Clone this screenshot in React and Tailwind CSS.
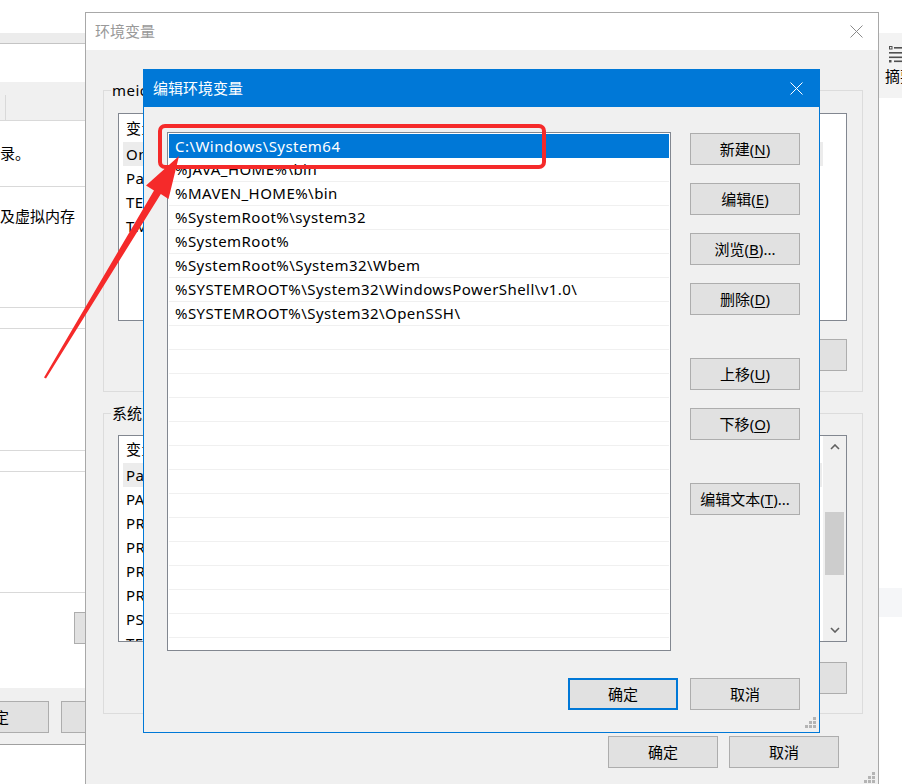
import React from 'react'

// Windows 10 "编辑环境变量" dialog over "环境变量", with a red callout.

const EDIT_ITEMS = [
  'C:\\Windows\\System64',
  '%JAVA_HOME%\\bin',
  '%MAVEN_HOME%\\bin',
  '%SystemRoot%\\system32',
  '%SystemRoot%',
  '%SystemRoot%\\System32\\Wbem',
  '%SYSTEMROOT%\\System32\\WindowsPowerShell\\v1.0\\',
  '%SYSTEMROOT%\\System32\\OpenSSH\\',
]

const USER_VARS = ['OneDrive', 'Path', 'TEMP', 'TMP']
const SYS_VARS = ['Path', 'PATHEXT', 'PROCESSOR_ARCHITECTURE', 'PROCESSOR_IDENTIFIER', 'PROCESSOR_LEVEL', 'PROCESSOR_REVISION', 'PSModulePath', 'TEMP', 'TMP']

function Btn({ label, mn, tail = '', def = false, className = '' }) {
  return (
    <div
      className={
        'flex h-[32px] w-[110px] shrink-0 items-center justify-center bg-[#e1e1e1] text-[15px] leading-none ' +
        (def ? 'border-2 border-[#0078d7] ' : 'border border-[#adadad] ') +
        className
      }
    >
      <span>
        {label}
        {mn && (
          <>
            (<span className="underline underline-offset-2">{mn}</span>){tail}
          </>
        )}
      </span>
    </div>
  )
}

function CloseX({ color }) {
  return (
    <svg width="13" height="13" viewBox="0 0 13 13">
      <path d="M0.5 0.5 L12.5 12.5 M12.5 0.5 L0.5 12.5" stroke={color} strokeWidth="1" fill="none" />
    </svg>
  )
}

function Grip() {
  return (
    <svg width="11" height="11" viewBox="0 0 11 11">
      {[[8, 0], [8, 4], [4, 4], [8, 8], [4, 8], [0, 8]].map(([x, y], i) => (
        <rect key={i} x={x} y={y} width="3" height="3" fill="#b4b4b4" />
      ))}
    </svg>
  )
}

function Chevron({ down }) {
  return (
    <svg width="10" height="6" viewBox="0 0 10 6">
      <path d={down ? 'M1 1 L5 5 L9 1' : 'M1 5 L5 1 L9 5'} stroke="#606060" strokeWidth="1.6" fill="none" />
    </svg>
  )
}

function BackWindow() {
  return (
    <div className="absolute left-0 top-0 flex h-full w-[86px] flex-col bg-white">
      <div className="h-[33px]" />
      <div className="h-[11px] border-b border-[#c4c4c4] bg-[#ececec]" />
      <div className="h-[38px]" />
      <div className="flex h-[38px] bg-[#f0f0f0]">
        <div className="ml-[5px] mt-[13px] h-[25px] border-l border-[#d9d9d9]" />
      </div>
      <div className="h-[66px] border-t border-[#d9d9d9] pt-[22px] leading-[20px]">录。</div>
      <div className="h-[121px] border-t border-[#d9d9d9] pt-[19px] leading-[20px] whitespace-nowrap">及虚拟内存</div>
      <div className="h-[22px] border-y border-[#d9d9d9]" />
      <div className="h-[121px]" />
      <div className="h-[22px] border-y border-[#d9d9d9]" />
      <div className="h-[120px]" />
      <div className="h-[96px] border-t border-[#d9d9d9] pt-[19px] pl-[74px]">
        <div className="h-[32px] w-[40px] border border-[#adadad] bg-[#e1e1e1]" />
      </div>
      <div className="flex h-[57px] gap-[12px] border-b border-[#a0a0a0] bg-[#f0f0f0] pt-[13px]">
        <Btn label="确定" className="-ml-[61px]" />
        <Btn label="" />
      </div>
    </div>
  )
}

function RightStrip() {
  return (
    <div className="absolute left-[879px] top-0 flex h-full w-[23px] flex-col overflow-hidden bg-white">
      <div className="mt-[33px] flex h-[65px] flex-col bg-[#f3f3f3] pl-[6px]">
        <svg className="mt-[13px] ml-[4px]" width="14" height="17" viewBox="0 0 14 17">
          <rect x="0.5" y="0.5" width="2.5" height="2.5" fill="none" stroke="#505050" strokeWidth="1" />
          <rect x="5" y="1" width="9" height="1.6" fill="#505050" />
          <rect x="0" y="6" width="14" height="1.6" fill="#505050" />
          <rect x="0" y="10.5" width="14" height="1.6" fill="#505050" />
          <rect x="0" y="14" width="2.5" height="2.5" fill="#505050" />
          <rect x="5" y="14.5" width="9" height="1.6" fill="#505050" />
        </svg>
        <div className="mt-[3px] whitespace-nowrap leading-[20px]">摘要</div>
      </div>
      <div className="mt-[490px] h-[29px] bg-[#f5f6f8]" />
    </div>
  )
}

function VarList({ rows, scroll, height, header }) {
  return (
    <div className="flex w-[729px] border border-[#828790] bg-white tracking-[0.45px]" style={{ height }}>
      <div className="min-w-0 flex-1 overflow-hidden">
        <div className="flex items-center pl-[7px] leading-none" style={{ height: header }}>变量</div>
        {rows.map((r, i) => (
          <div key={r + i} className={'ml-[4px] flex h-[24px] w-[700px] items-center pl-[3px] leading-none ' + (i === 0 ? 'bg-[#ececec]' : '')}>
            {r}
          </div>
        ))}
      </div>
      {scroll && (
        <div className="flex w-[24px] flex-col border-l border-white bg-[#f0f0f0]">
          <div className="flex h-[22px] items-center justify-center"><Chevron /></div>
          <div className="flex flex-1 flex-col px-[2px]">
            <div className="h-[54px]" />
            <div className="h-[63px] bg-[#cdcdcd]" />
          </div>
          <div className="flex h-[22px] items-center justify-center"><Chevron down /></div>
        </div>
      )}
    </div>
  )
}

function EnvWindow() {
  return (
    <div className="absolute left-[85px] top-[12px] flex h-[790px] w-[794px] flex-col border border-[#a8a8a8] bg-[#f0f0f0]">
      <div className="flex h-[37px] items-center justify-between bg-white pl-[9px] pr-[15px]">
        <span className="text-[#999999]">环境变量</span>
        <CloseX color="#8a8a8a" />
      </div>
      <fieldset className="ml-[17px] mt-[30px] w-[760px] border border-[#dcdcdc] pb-[20px] pl-[14px] pt-[13px]">
        <legend className="-ml-[7px] px-[1px] leading-[20px] tracking-[0.45px]">meiocan 的用户变量(U)</legend>
        <VarList rows={USER_VARS} height={208} header={28} />
        <div className="mt-[18px] flex justify-end gap-[11px] pr-[15px]">
          <Btn label="新建" mn="N" tail="..." />
          <Btn label="编辑" mn="E" tail="..." />
          <Btn label="删除" mn="D" />
        </div>
      </fieldset>
      <fieldset className="ml-[17px] mt-[11px] w-[760px] border border-[#dcdcdc] pb-[19px] pl-[14px] pt-[12px]">
        <legend className="-ml-[7px] px-[1px] leading-[20px]">系统变量(S)</legend>
        <VarList rows={SYS_VARS} height={207} header={27} scroll />
        <div className="mt-[20px] flex justify-end gap-[11px] pr-[15px]">
          <Btn label="新建" mn="W" tail="..." />
          <Btn label="编辑" mn="I" tail="..." />
          <Btn label="删除" mn="L" />
        </div>
      </fieldset>
      <div className="mt-[22px] flex justify-end gap-[11px] pr-[39px]">
        <Btn label="确定" />
        <Btn label="取消" />
      </div>
      <div className="mt-[4px] flex justify-end pr-[3px]"><Grip /></div>
    </div>
  )
}

function EditDialog() {
  const rows = [...EDIT_ITEMS, ...Array(14).fill('')]
  return (
    <div className="absolute left-[143px] top-[69px] flex h-[664px] w-[677px] flex-col border border-[#0078d7] bg-[#f0f0f0]">
      <div className="flex h-[37px] items-center justify-between bg-[#0078d7] pl-[9px] pr-[16px]">
        <span className="text-white">编辑环境变量</span>
        <CloseX color="#ffffff" />
      </div>
      <div className="mt-[25px] flex pl-[23px]">
        <div className="h-[519px] w-[504px] overflow-hidden border border-[#828790] bg-white pt-[1px] tracking-[0.45px]">
          {rows.map((t, i) => (
            <div
              key={i}
              className={
                'mx-[1px] flex h-[24px] items-center whitespace-nowrap pl-[6px] leading-none ' +
                (i === 0 ? 'bg-[#0078d7] text-white' : 'border-b border-[#f0f0f0]')
              }
            >
              {t}
            </div>
          ))}
        </div>
        <div className="ml-[19px] mt-[1px] flex flex-col">
          <Btn label="新建" mn="N" />
          <Btn label="编辑" mn="E" className="mt-[18px]" />
          <Btn label="浏览" mn="B" tail="..." className="mt-[18px]" />
          <Btn label="删除" mn="D" className="mt-[18px]" />
          <Btn label="上移" mn="U" className="mt-[43px]" />
          <Btn label="下移" mn="O" className="mt-[18px]" />
          <Btn label="编辑文本" mn="T" tail="..." className="mt-[43px]" />
        </div>
      </div>
      <div className="mt-[27px] flex justify-end gap-[12px] pr-[19px]">
        <Btn label="确定" def />
        <Btn label="取消" />
      </div>
      <div className="mt-[7px] flex justify-end pr-[3px]"><Grip /></div>
    </div>
  )
}

function Annotation() {
  return (
    <svg className="pointer-events-none absolute inset-0" width="902" height="784" viewBox="0 0 902 784">
      <rect x="160" y="126" width="384" height="41" rx="5" fill="none" stroke="#f52a2a" strokeWidth="4" />
      <polygon
        fill="#f52a2a"
        points="44,377.4 154,190.5 146,185.5 179,156 168.5,199 160.8,194 46,378.6"
      />
    </svg>
  )
}

export default function App() {
  return (
    <div className="relative h-[784px] w-[902px] overflow-hidden bg-white font-['Noto_Sans','Noto_Sans_CJK_SC',sans-serif] text-[15px] text-black">
      <BackWindow />
      <RightStrip />
      <EnvWindow />
      <EditDialog />
      <Annotation />
    </div>
  )
}
